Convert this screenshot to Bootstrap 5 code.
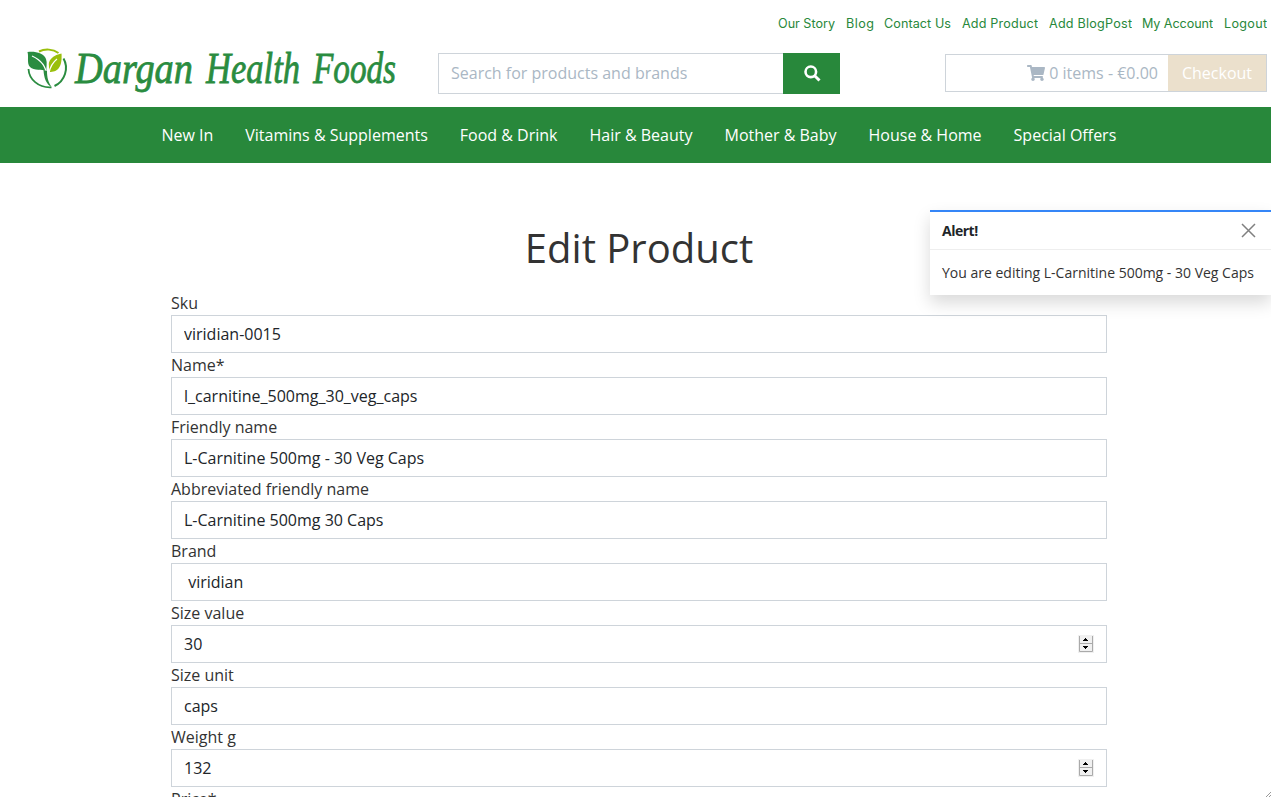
<!DOCTYPE html>
<html lang="en">
<head>
<meta charset="utf-8">
<meta name="viewport" content="width=device-width, initial-scale=1">
<title>Edit Product - Dargan Health Foods</title>
<link href="https://cdn.jsdelivr.net/npm/bootstrap@5.3.0/dist/css/bootstrap.min.css" rel="stylesheet">
<style>
  body { font-family: "Open Sans", "Noto Sans", sans-serif; color: #333; background: #fff; height: 100vh; overflow: hidden; }
  .site-header { height: 107px; padding: 0 4px 0 26px; }
  .top-links { height: 46px; gap: 10.7px; font: 12.6px/46px Inter, "Open Sans", sans-serif; }
  .top-links a, .top-links svg { color: #28883b; text-decoration: none; display: block; }
  .top-links text { fill: #28883b; }
  .brand-logo { width: 380px; height: 60px; margin-top: -4px; }
  .brand-logo text { font-family: "Liberation Serif", serif; font-style: italic; fill: #2a8c40; stroke: #2a8c40; stroke-width: .8px; }
  .search-box { width: 402px; height: 41px; margin-left: 32px; margin-top: 7px; }
  .form-control { border-radius: 0; border-color: #ced4da; color: #212529; height: 38px; padding: 6px 12px; background: #fff; }
  .search-box .form-control { height: 41px; padding: 5px 12px 7px; }
  .form-control::placeholder { color: #aab7c4; opacity: 1; }
  .btn-search { width: 57px; background: #28883b; border-radius: 0; padding: 0 0 3px 1px; }
  .bag { width: 322px; height: 38px; margin-top: 8px; border: 1px solid #ced4da; color: #aab7c4; }
  .bag-total { padding-right: 10px; line-height: 36px; }
  .btn-checkout { width: 98px; background: #ebe0cc; color: #fff; border-radius: 0; border: 0; padding: 0; }
  .main-nav { height: 56px; background: #28883b; padding: 0 0 0 145.4px; }
  .main-nav .nav-link { color: #fff; padding: 0 16px; line-height: 56px; white-space: nowrap; }
  .edit-form { width: 936px; margin-left: 171px; padding-top: 61px; }
  .edit-form h1 { font-size: 40px; line-height: 48px; margin-bottom: 19px; font-weight: 400; }
  .edit-form label { display: block; height: 24px; line-height: 24px; }
  .field-box { position: relative; }
  .spinner { position: absolute; right: 13px; top: 10px; width: 16px; height: 18px; }
  .toast.notice { position: absolute; top: 210px; right: 0; width: 341px; border: 0; border-top: 2px solid #3586f7; border-radius: 0; background: #fff; font-size: 14px; box-shadow: 0 8px 16px rgba(0,0,0,.15); }
  .notice .toast-header { height: 38px; padding: 0 12px; color: #212529; background: #fff; border-bottom: 1px solid #eee; border-radius: 0; }
  .notice .toast-header strong { letter-spacing: -.5px; }
  .notice .toast-body { padding: 12px; height: 45px; line-height: 21px; white-space: nowrap; color: #333; }
  .close-x { margin-right: 3.500px; width: 15px; height: 15px; border: 0; padding: 0; background: none; display: flex; }
  .grip { position: absolute; right: 0; bottom: 0; }
</style>
</head>
<body>
<header class="site-header">
  <nav class="top-links d-flex justify-content-end">
    <a href="#"><svg width="57" height="46"><text x="0" y="28" textLength="57">Our Story</text></svg></a>
    <a href="#"><svg width="28" height="46"><text x="0" y="28" textLength="28">Blog</text></svg></a>
    <a href="#"><svg width="67" height="46"><text x="0" y="28" textLength="67">Contact Us</text></svg></a>
    <a href="#"><svg width="76" height="46"><text x="0" y="28" textLength="76">Add Product</text></svg></a>
    <a href="#"><svg width="83" height="46"><text x="0" y="28" textLength="83">Add BlogPost</text></svg></a>
    <a href="#"><svg width="71" height="46"><text x="0" y="28" textLength="71">My Account</text></svg></a>
    <a href="#"><svg width="43" height="46"><text x="0" y="28" textLength="43">Logout</text></svg></a>
  </nav>
  <div class="d-flex">
    <svg class="brand-logo flex-shrink-0" viewBox="26 42 380 60">
      <path d="M28.500 69C29 79 38 88 51.500 87.300" fill="none" stroke="#2a8c40" stroke-width="1.800"/>
      <path d="M63.500 58.500C69 68 65 81 54.500 86" fill="none" stroke="#2a8c40" stroke-width="2"/>
      <path d="M39 51.500C45 48.500 53 49 58.500 53" fill="none" stroke="#9abf0c" stroke-width="2"/>
      <path d="M27.500 52C35 51 44 53 46 59C47.500 63 46 67 46.500 71C42 69 34 71 30 67C26.500 63 29 57 27.500 52Z" fill="#2a8c40"/>
      <path d="M61.500 53.500C54 55 49 59 48.800 64L49.300 72C57 72 62.500 68 61.500 53.500Z" fill="#9abf0c"/>
      <path d="M32 56C41 60 46 66 46.500 75C46.500 80 49 84 52.500 87" fill="none" stroke="#fff" stroke-width="1.300"/>
      <path d="M43.500 70C44 78 46 84 52 87.500C48 82 47 77 47 71Z" fill="#2a8c40"/>
      <path d="M57 59C52 63 50 67 49 73" fill="none" stroke="#fff" stroke-width="1.200"/>
      <text x="75" y="83" font-size="44" textLength="118" lengthAdjust="spacingAndGlyphs">Dargan</text>
      <text x="206" y="83" font-size="44" textLength="94" lengthAdjust="spacingAndGlyphs">Health</text>
      <text x="313" y="83" font-size="44" textLength="83" lengthAdjust="spacingAndGlyphs">Foods</text>
    </svg>
    <form class="search-box input-group flex-nowrap">
      <input class="form-control" type="text" placeholder="Search for products and brands">
      <button class="btn btn-search" type="button" aria-label="Search">
        <svg width="17" height="17" viewBox="0 0 17 17" fill="none" stroke="#fff"><circle cx="6.800" cy="6.800" r="5.300" stroke-width="2.600"/><path d="M10.700 10.700L15.500 15.500" stroke-width="3"/></svg>
      </button>
    </form>
    <div class="bag d-flex ms-auto">
      <div class="bag-total ms-auto d-flex align-items-center">
        <svg class="me-1" width="18" height="16" viewBox="0 0 576 512"><path fill="#aab7c4" d="M528.100 301.300l47.300-208C578.800 78.300 567.400 64 552 64H159.200l-9.200-44.800C147.800 8 137.900 0 126.500 0H24C10.700 0 0 10.700 0 24v16c0 13.300 10.700 24 24 24h69.900l70.200 343.400C147.300 417.100 136 435.200 136 456c0 30.900 25.100 56 56 56s56-25.100 56-56c0-15.700-6.400-29.800-16.800-40h209.600C430.400 426.200 424 440.300 424 456c0 30.900 25.100 56 56 56s56-25.100 56-56c0-22.200-12.900-41.300-31.600-50.400l5.500-24.300c3.400-15-8-29.300-23.400-29.300H218.100l-6.500-32h293.100c11.200 0 20.900-7.800 23.400-18.700z"/></svg><span>0 items - €0.00</span>
      </div>
      <button class="btn btn-checkout" type="button">Checkout</button>
    </div>
  </div>
</header>
<nav class="main-nav nav flex-nowrap">
  <a class="nav-link" href="#">New In</a>
  <a class="nav-link" href="#">Vitamins &amp; Supplements</a>
  <a class="nav-link" href="#">Food &amp; Drink</a>
  <a class="nav-link" href="#">Hair &amp; Beauty</a>
  <a class="nav-link" href="#">Mother &amp; Baby</a>
  <a class="nav-link" href="#">House &amp; Home</a>
  <a class="nav-link" href="#">Special Offers</a>
</nav>
<main class="edit-form">
  <h1 class="text-center">Edit Product</h1>
  <label for="sku">Sku</label>
  <input id="sku" class="form-control" value="viridian-0015">
  <label for="name">Name*</label>
  <input id="name" class="form-control" value="l_carnitine_500mg_30_veg_caps">
  <label for="friendly">Friendly name</label>
  <input id="friendly" class="form-control" value="L-Carnitine 500mg - 30 Veg Caps">
  <label for="abbr">Abbreviated friendly name</label>
  <input id="abbr" class="form-control" value="L-Carnitine 500mg 30 Caps">
  <label for="brand">Brand</label>
  <input id="brand" class="form-control" value=" viridian">
  <label for="size">Size value</label>
  <div class="field-box">
    <input id="size" class="form-control" value="30">
    <svg class="spinner" viewBox="0 0 16 18"><path d="M0 0H16V18H0Z" fill="#f0f0f0"/><path d="M1.500 1V16.500H14.500V1M1 8.500H15" fill="none" stroke="#aaa"/><path d="M4 6H9V5H8V4H7V3H6V4H5V5H4ZM4 11H9V12H8V13H7V14H6V13H5V12H4Z" transform="translate(1)"/></svg>
  </div>
  <label for="unit">Size unit</label>
  <input id="unit" class="form-control" value="caps">
  <label for="weight">Weight g</label>
  <div class="field-box">
    <input id="weight" class="form-control" value="132">
    <svg class="spinner" viewBox="0 0 16 18"><path d="M0 0H16V18H0Z" fill="#f0f0f0"/><path d="M1.500 1V16.500H14.500V1M1 8.500H15" fill="none" stroke="#aaa"/><path d="M4 6H9V5H8V4H7V3H6V4H5V5H4ZM4 11H9V12H8V13H7V14H6V13H5V12H4Z" transform="translate(1)"/></svg>
  </div>
  <label>Price*</label>
</main>
<div class="toast notice show" role="alert">
  <div class="toast-header d-flex">
    <strong class="me-auto">Alert!</strong>
    <button class="close-x" type="button" aria-label="Close"><svg width="15" height="15" viewBox="0 0 15 15"><path d="M1 1L14 14M14 1L1 14" stroke="#808080" stroke-width="1.500"/></svg></button>
  </div>
  <div class="toast-body">You are editing L-Carnitine 500mg - 30 Veg Caps</div>
</div>
<svg class="grip" width="5" height="5"><path d="M0 5L5 0M3 5L5 3" stroke="#999"/></svg>
<script src="https://cdn.jsdelivr.net/npm/bootstrap@5.3.0/dist/js/bootstrap.bundle.min.js"></script>
</body>
</html>
